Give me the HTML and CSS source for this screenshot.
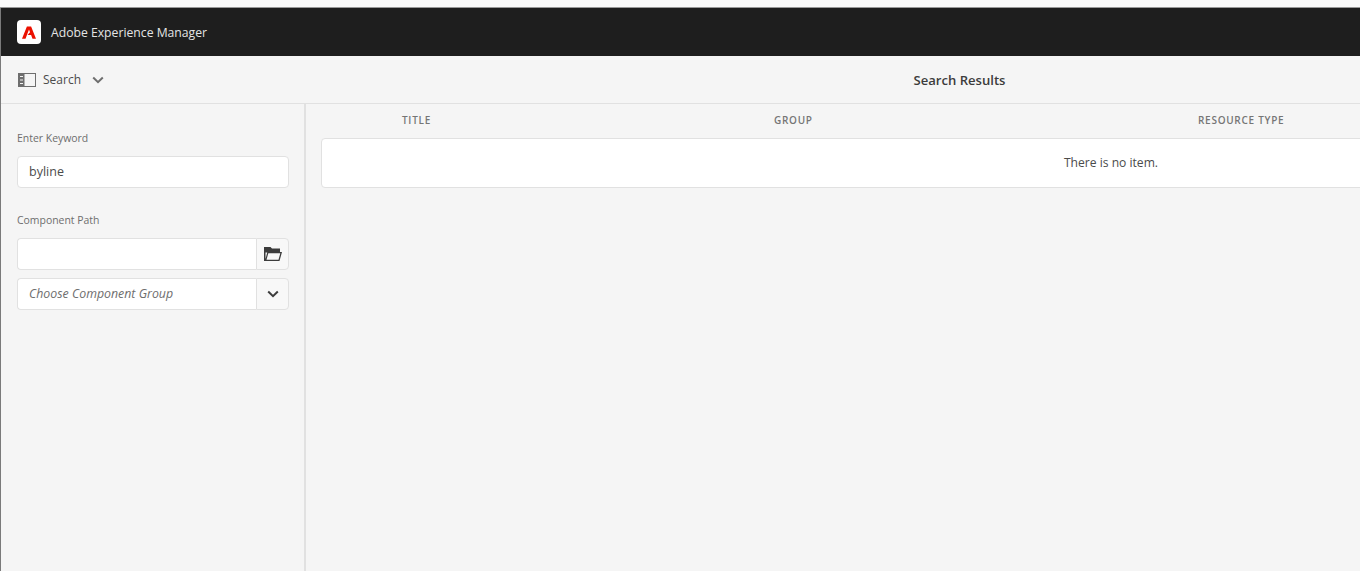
FILE: index.html
```html
<!DOCTYPE html>
<html lang="en">
<head>
<meta charset="utf-8">
<title>Adobe Experience Manager</title>
<link rel="stylesheet" href="styles.css">
</head>
<body>
<div class="browser-top"></div>
<div class="window">
  <header class="shell">
    <span class="logo">
      <svg width="14" height="13" viewBox="0 0 16 14" aria-hidden="true"><path fill="#eb1000" d="M5.600 0H10.400L16 14H12L10.400 9.800H6.300L8.900 6.900H9.300L8 3.500L4 14H0Z"/></svg>
    </span>
    <span class="brand">Adobe Experience Manager</span>
  </header>
  <div class="toolbar">
    <div class="rail-toggle">
      <svg class="rail-icon" width="18" height="14" viewBox="0 0 18 14" aria-hidden="true"><path fill="#6e6e6e" fill-rule="evenodd" d="M0 0H18V14H0ZM6.500 1V13H17V1ZM2 3V4H5V3ZM2 6.500V7.500H5V6.500ZM2 10V11H5V10Z"/></svg>
      <span class="rail-label">Search</span>
      <svg class="chev" width="12" height="8" viewBox="0 0 12 8" aria-hidden="true"><path d="M1.200 1.500L6 6.200L10.800 1.500" fill="none" stroke="#6e6e6e" stroke-width="2"/></svg>
    </div>
    <div class="toolbar-title">Search Results</div>
  </div>
  <div class="main">
    <aside class="sidebar">
      <label class="field-label first">Enter Keyword</label>
      <div class="input">byline</div>
      <label class="field-label second">Component Path</label>
      <div class="group">
        <div class="input joined"></div>
        <div class="addon">
          <svg width="18" height="14" viewBox="0 0 18 14" aria-hidden="true"><path fill="#3c3c3c" fill-rule="evenodd" d="M0 0H6.500L8 1.500H16V5H18L15.500 14H0ZM1.500 5.500V12L3.200 5.500ZM4.300 6.300L2.500 12.800H14.500L16.300 6.300Z"/></svg>
        </div>
      </div>
      <div class="group second-group">
        <div class="input joined placeholder">Choose Component Group</div>
        <div class="addon">
          <svg width="12" height="8" viewBox="0 0 12 8" aria-hidden="true"><path d="M1.200 1.500L6 6.200L10.800 1.500" fill="none" stroke="#3c3c3c" stroke-width="2"/></svg>
        </div>
      </div>
    </aside>
    <section class="results">
      <div class="thead">
        <span class="th th-title">TITLE</span>
        <span class="th th-group">GROUP</span>
        <span class="th">RESOURCE TYPE</span>
      </div>
      <div class="empty">There is no item.</div>
    </section>
  </div>
</div>
</body>
</html>
```
FILE: styles.css
```css
* { box-sizing: border-box; }
html, body { margin: 0; height: 100%; overflow: hidden; }
body {
  background: #f5f5f5;
  font-family: "Open Sans", "Noto Sans", sans-serif;
  color: #4b4b4b;
  display: flex;
  flex-direction: column;
}
.browser-top {
  height: 8px;
  background: #fafafa;
  border-bottom: 1px solid #999;
  flex: none;
}
.window {
  flex: 1;
  min-height: 0;
  border-left: 1px solid #7a7a7a;
  display: flex;
  flex-direction: column;
}
.shell {
  height: 48px;
  flex: none;
  background: #1e1e1e;
  display: flex;
  align-items: center;
  padding-left: 16px;
}
.logo {
  width: 24px;
  height: 24px;
  background: #fff;
  border-radius: 4px;
  display: flex;
  align-items: center;
  justify-content: center;
}
.brand {
  margin-left: 10px;
  color: #e4e4e4;
  font-size: 12.200px;
  white-space: nowrap;
}
.toolbar {
  height: 48px;
  flex: none;
  display: flex;
  align-items: center;
  border-bottom: 1px solid #e1e1e1;
  overflow: hidden;
}
.rail-toggle {
  width: 304px;
  padding-left: 17px;
  display: flex;
  align-items: center;
  flex: none;
}
.rail-label { margin-left: 7px; font-size: 12px; color: #4b4b4b; }
.chev { margin-left: 11px; }
.toolbar-title {
  flex: none;
  width: 1309px;
  text-align: center;
  font-size: 13.100px;
  font-weight: 600;
  color: #3c3c3c;
}
.main { flex: 1; display: flex; min-height: 0; }
.sidebar {
  width: 305px;
  flex: none;
  border-right: 2px solid #e1e1e1;
  padding: 0 15px 0 16px;
}
.field-label {
  display: block;
  font-size: 10.450px;
  line-height: 16px;
  color: #6e6e6e;
}
.first { margin-top: 26px; margin-bottom: 10px; }
.second { margin-top: 24px; margin-bottom: 10px; }
.input {
  height: 32px;
  background: #fff;
  border: 1px solid #e1e1e1;
  border-radius: 4px;
  padding: 0 11px;
  font-size: 12.500px;
  line-height: 30px;
  color: #4b4b4b;
}
.group { display: flex; }
.second-group { margin-top: 8px; }
.joined {
  flex: 1;
  border-radius: 4px 0 0 4px;
  border-right: 0;
}
.placeholder { font-style: italic; color: #6e6e6e; font-size: 12.350px; }
.addon {
  width: 33px;
  height: 32px;
  flex: none;
  background: #f8f8f8;
  border: 1px solid #e1e1e1;
  border-radius: 0 4px 4px 0;
  display: flex;
  align-items: center;
  justify-content: center;
}
.results { flex: 1; min-width: 0; padding-left: 15px; overflow: hidden; }
.thead {
  height: 34px;
  padding: 0 0 2px 81px;
  display: flex;
  align-items: center;
}
.th {
  font-size: 10px;
  font-weight: 600;
  letter-spacing: 0.720px;
  color: #757575;
  white-space: nowrap;
}
.th-title { width: 372px; }
.th-group { width: 424px; }
.empty {
  width: 1580px;
  height: 50px;
  background: #fff;
  border: 1px solid #e1e1e1;
  border-radius: 4px;
  text-align: center;
  line-height: 48px;
  font-size: 12.100px;
  color: #4b4b4b;
}
```
